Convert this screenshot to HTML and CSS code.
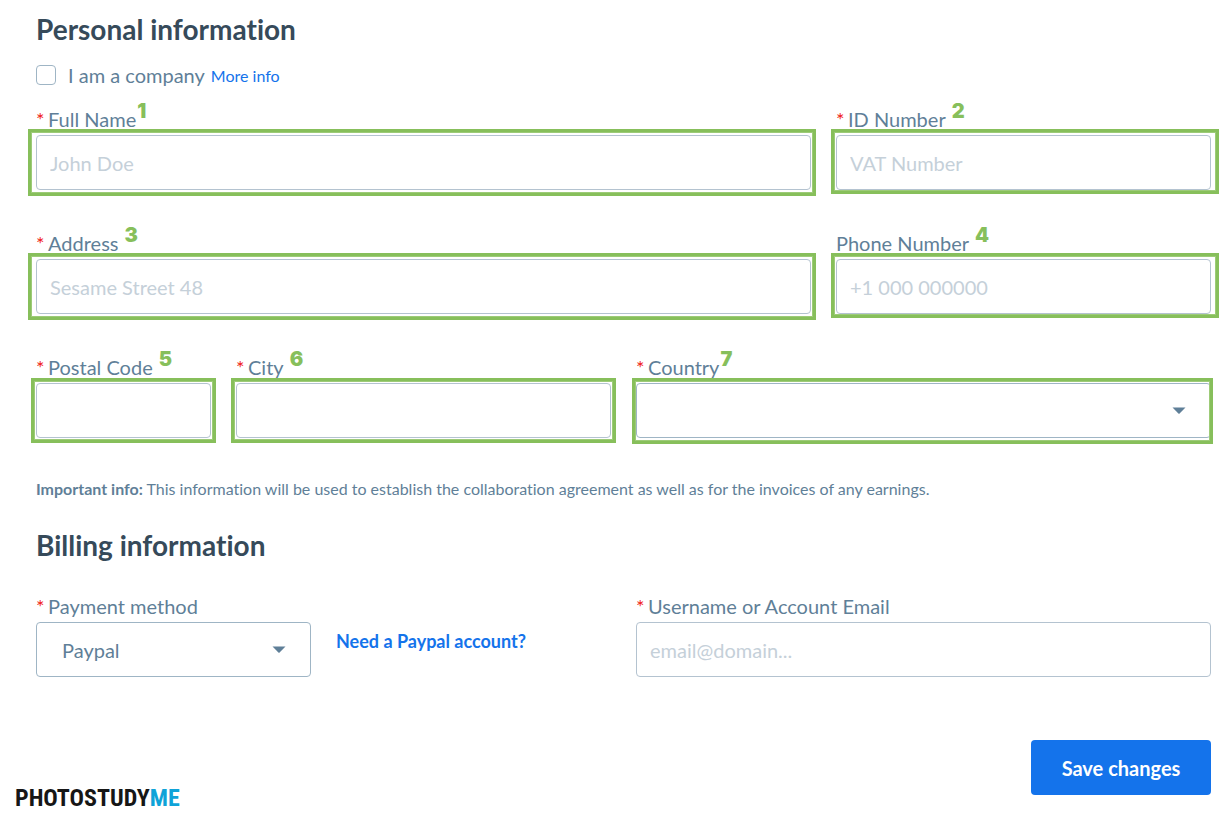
FILE: index.html
```html
<!DOCTYPE html>
<html lang="en">
<head>
    <meta charset="UTF-8">
    <meta name="viewport" content="width=device-width, initial-scale=1.0">
    <title>Personal information</title>
    <link rel="stylesheet" href="styles.css">
</head>
<body>

    <form class="page">
        <!-- Personal information -->
        <h2>Personal information</h2>

        <div class="company-row">
            <input type="checkbox" id="company" name="company">
            <label for="company">I am a company</label>
            <a href="#">More info</a>
        </div>

        <div class="grid">
            <div class="field span-4">
                <div class="label-row tight">
                    <label for="name"><span class="required">*</span>Full Name</label>
                    <span class="mark">1</span>
                </div>
                <div class="control frame frame-left">
                    <input type="text" id="name" name="name" placeholder="John Doe">
                </div>
            </div>
            <div class="field span-2">
                <div class="label-row">
                    <label for="vat"><span class="required">*</span>ID Number</label>
                    <span class="mark">2</span>
                </div>
                <div class="control frame frame-right">
                    <input type="text" id="vat" name="vat" placeholder="VAT Number">
                </div>
            </div>

            <div class="field span-4">
                <div class="label-row">
                    <label for="address"><span class="required">*</span>Address</label>
                    <span class="mark">3</span>
                </div>
                <div class="control frame frame-left">
                    <input type="text" id="address" name="address" placeholder="Sesame Street 48">
                </div>
            </div>
            <div class="field span-2">
                <div class="label-row">
                    <label for="phone">Phone Number</label>
                    <span class="mark">4</span>
                </div>
                <div class="control frame frame-right">
                    <input type="tel" id="phone" name="phone" placeholder="+1 000 000000">
                </div>
            </div>

            <div class="field">
                <div class="label-row">
                    <label for="postal"><span class="required">*</span>Postal Code</label>
                    <span class="mark">5</span>
                </div>
                <div class="control frame">
                    <input type="text" id="postal" name="postal">
                </div>
            </div>
            <div class="field span-2">
                <div class="label-row">
                    <label for="city"><span class="required">*</span>City</label>
                    <span class="mark">6</span>
                </div>
                <div class="control frame">
                    <input type="text" id="city" name="city">
                </div>
            </div>
            <div class="field span-3">
                <div class="label-row tight">
                    <label for="country"><span class="required">*</span>Country</label>
                    <span class="mark">7</span>
                </div>
                <div class="control frame frame-select">
                    <select id="country" name="country">
                        <option value=""></option>
                    </select>
                    <svg class="arrow" viewBox="0 0 14 7"><path d="M0.5 0.5h13L7.6 6.6q-0.6 0.5-1.2 0z"/></svg>
                </div>
            </div>
        </div>

        <p class="note"><strong>Important info:</strong> This information will be used to establish the collaboration agreement as well as for the invoices of any earnings.</p>

        <!-- Billing information -->
        <h2>Billing information</h2>

        <div class="billing">
            <div class="payment">
                <div class="field">
                    <div class="label-row">
                        <label for="method"><span class="required">*</span>Payment method</label>
                    </div>
                    <div class="control">
                        <select id="method" name="method">
                            <option>Paypal</option>
                        </select>
                        <svg class="arrow" viewBox="0 0 14 7"><path d="M0.5 0.5h13L7.6 6.6q-0.6 0.5-1.2 0z"/></svg>
                    </div>
                </div>
                <a class="help" href="#">Need a Paypal account?</a>
            </div>
            <div class="field">
                <div class="label-row">
                    <label for="email"><span class="required">*</span>Username or Account Email</label>
                </div>
                <div class="control">
                    <input type="email" id="email" name="email" placeholder="email@domain...">
                </div>
            </div>
        </div>

        <div class="footer">
            <div class="logo">PHOTOSTUDY<span>ME</span></div>
            <button type="submit">Save changes</button>
        </div>
    </form>

</body>
</html>
```
FILE: styles.css
```css
* {
    box-sizing: border-box;
}
body {
    font-family: Lato, 'Liberation Sans', sans-serif;
    font-variant-ligatures: none;
    margin: 0;
    background-color: #ffffff;
    color: #5f7f98;
    font-size: 20px;
}
.page {
    padding: 12px 19px 16px 36px;
}
h2 {
    margin: 0;
    font-size: 28px;
    line-height: 34px;
    font-weight: bold;
    color: #364a5a;
}
a {
    color: #1473eb;
    text-decoration: none;
}

/* Company checkbox */
.company-row {
    display: flex;
    align-items: center;
    height: 30px;
    margin: 14px 0 15px;
}
.company-row input {
    appearance: none;
    width: 20px;
    height: 20px;
    margin: 0 12px 0 0;
    border: 1px solid #9fb5c5;
    border-radius: 4px;
}
.company-row a {
    margin-left: 6px;
    font-size: 16px;
}

/* Form grid */
.grid {
    display: grid;
    grid-template-columns: repeat(6, 1fr);
    gap: 39px 25px;
}
.span-2 {
    grid-column: span 2;
}
.span-3 {
    grid-column: span 3;
}
.span-4 {
    grid-column: span 4;
}
.label-row {
    display: flex;
    gap: 6px;
    height: 30px;
    line-height: 28px;
    white-space: nowrap;
}
.tight {
    gap: 1px;
}
.required {
    display: inline-block;
    width: 12px;
    color: #f02020;
}
.mark {
    font-family: Inter, 'Liberation Sans', sans-serif;
    font-size: 20px;
    line-height: 12px;
    font-weight: 900;
    color: #87bf5b;
}
.control {
    position: relative;
}
.control input, .control select {
    display: block;
    appearance: none;
    width: 100%;
    height: 55px;
    padding: 0 13px;
    border: 1px solid #b4c3d0;
    border-radius: 4px;
    background-color: #ffffff;
    font-family: inherit;
    font-size: 20px;
    color: #5f7f98;
}
.control select {
    padding: 0 25px;
    border-color: #9fb5c5;
}
.control input::placeholder {
    color: #c5d0d9;
}
.arrow {
    position: absolute;
    top: 24px;
    right: 25px;
    width: 14px;
    height: 7px;
    fill: #5f7f98;
    pointer-events: none;
}

/* Green frames around the numbered fields */
.frame::after {
    content: "";
    position: absolute;
    inset: -5px;
    border: 3px solid #87bf5b;
    box-shadow: inset 0 0 0 1px #9dcb78;
    pointer-events: none;
}
.frame-left::after {
    inset: -6px -5px -6px -8px;
}
.frame-right::after {
    inset: -6px -8px -4px -5px;
}
.frame-select::after {
    inset: -5px -2px -6px -4px;
}

.note {
    margin: 40px 0 28px;
    font-size: 16px;
    line-height: 22px;
}

/* Billing */
.billing {
    display: grid;
    grid-template-columns: 1fr 1fr;
    gap: 25px;
    margin-top: 30px;
}
.payment {
    display: flex;
    gap: 25px;
}
.payment .field {
    width: 275px;
}
.help {
    padding-top: 38px;
    font-size: 18px;
    line-height: 22px;
    font-weight: bold;
}

.footer {
    display: flex;
    justify-content: space-between;
    align-items: flex-start;
    margin-top: 63px;
}
.logo {
    margin: 42px 0 0 -21px;
    font-family: 'Roboto Condensed', Roboto, 'Liberation Sans', sans-serif;
    font-size: 24px;
    line-height: 32px;
    font-weight: bold;
    color: #161616;
}
.logo span {
    color: #0fa3d8;
}
button {
    width: 180px;
    height: 55px;
    border: none;
    border-radius: 4px;
    background-color: #1473eb;
    color: #ffffff;
    font-family: inherit;
    font-size: 20px;
    font-weight: bold;
    cursor: pointer;
}
```
